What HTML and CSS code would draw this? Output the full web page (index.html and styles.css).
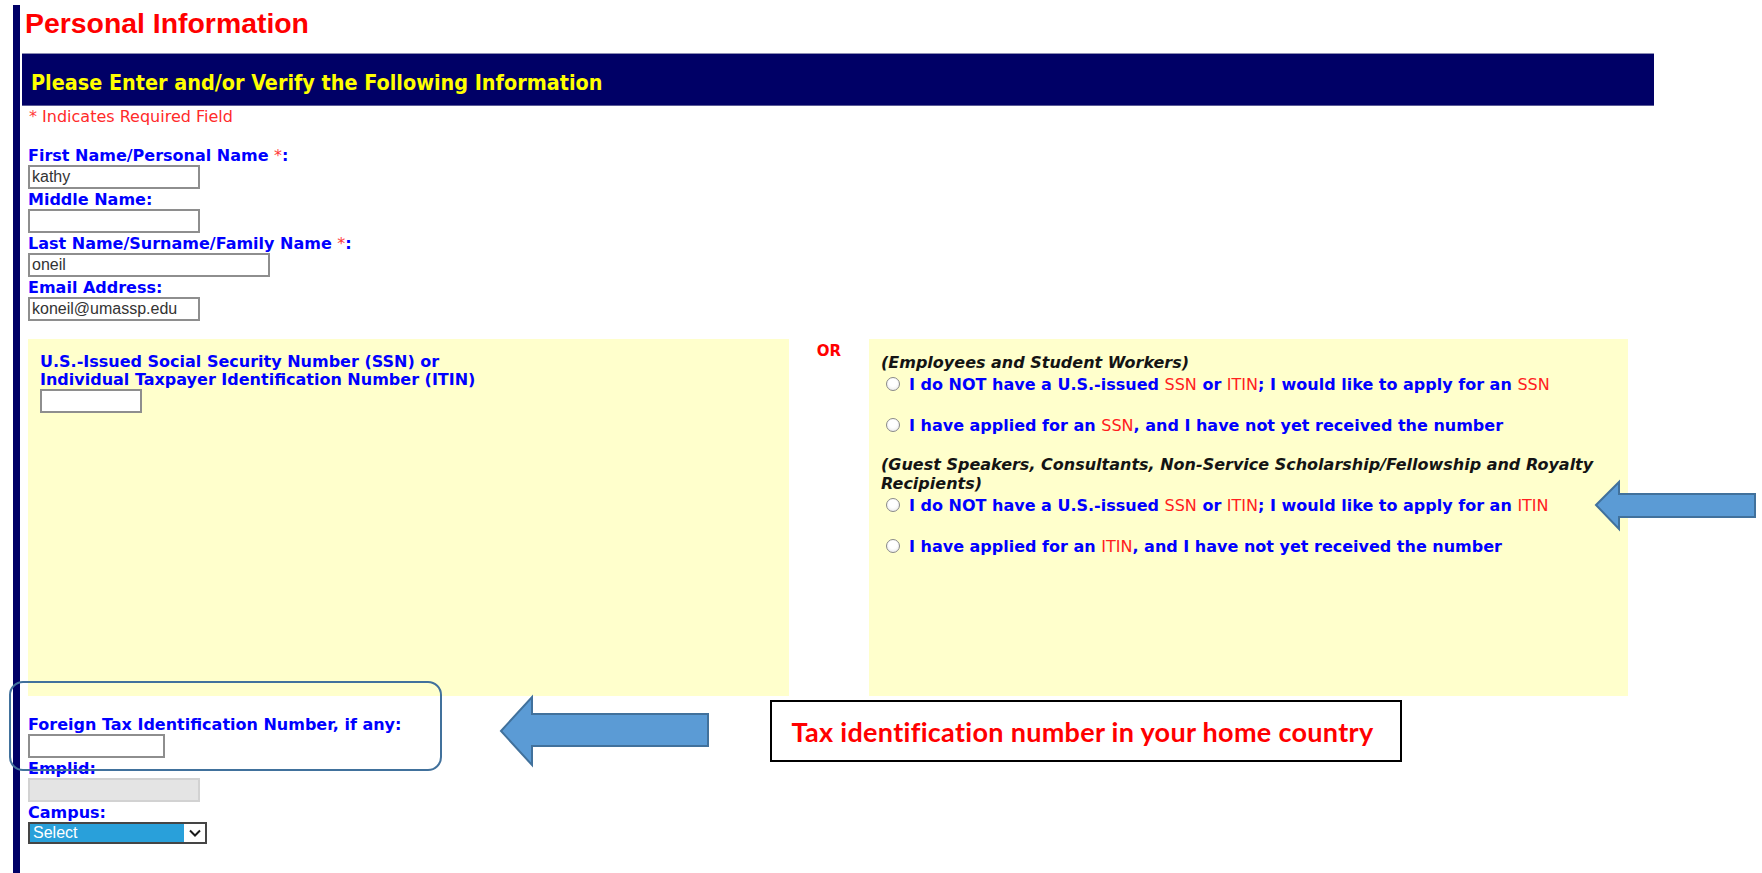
FILE: index.html
```html
<!DOCTYPE html>
<html lang="en">
<head>
<meta charset="utf-8">
<title>Personal Information</title>
<link rel="stylesheet" href="styles.css">
</head>
<body>
<div class="page">
  <h1 class="page-title">Personal Information</h1>
  <div class="section-band">Please Enter and/or Verify the Following Information</div>
  <p class="required-note"><span class="req">*</span> Indicates Required Field</p>

  <div class="fields">
    <div class="field">
      <label class="field-label" for="first-name">First Name/Personal Name <span class="req">*</span>:</label>
      <input class="text-input w-md" id="first-name" type="text" value="kathy">
    </div>
    <div class="field">
      <label class="field-label" for="middle-name">Middle Name:</label>
      <input class="text-input w-md" id="middle-name" type="text" value="">
    </div>
    <div class="field">
      <label class="field-label" for="last-name">Last Name/Surname/Family Name <span class="req">*</span>:</label>
      <input class="text-input w-lg" id="last-name" type="text" value="oneil">
    </div>
    <div class="field">
      <label class="field-label" for="email">Email Address:</label>
      <input class="text-input w-md" id="email" type="text" value="koneil@umassp.edu">
    </div>
  </div>

  <div class="tax-id-row">
    <div class="panel panel-ssn">
      <label class="panel-label" for="ssn">U.S.-Issued Social Security Number (SSN) or<br>Individual Taxpayer Identification Number (ITIN)</label>
      <input class="text-input w-sm" id="ssn" type="text" value="">
    </div>
    <div class="or-cell">OR</div>
    <div class="panel panel-choices">
      <div class="choice-group">
        <div class="group-title">(Employees and Student Workers)</div>
        <label class="radio-row"><input class="radio" type="radio" name="no-number"><span>I do NOT have a U.S.-issued <span class="acr">SSN</span> or <span class="acr">ITIN</span>; I would like to apply for an <span class="acr">SSN</span></span></label>
        <label class="radio-row"><input class="radio" type="radio" name="no-number"><span>I have applied for an <span class="acr">SSN</span>, and I have not yet received the number</span></label>
      </div>
      <div class="choice-group">
        <div class="group-title">(Guest Speakers, Consultants, Non-Service Scholarship/Fellowship and Royalty Recipients)</div>
        <label class="radio-row"><input class="radio" type="radio" name="no-number"><span>I do NOT have a U.S.-issued <span class="acr">SSN</span> or <span class="acr">ITIN</span>; I would like to apply for an <span class="acr">ITIN</span></span></label>
        <label class="radio-row"><input class="radio" type="radio" name="no-number"><span>I have applied for an <span class="acr">ITIN</span>, and I have not yet received the number</span></label>
      </div>
    </div>
  </div>

  <div class="fields fields-lower">
    <div class="field">
      <label class="field-label" for="foreign-tin">Foreign Tax Identification Number, if any:</label>
      <input class="text-input w-xs" id="foreign-tin" type="text" value="">
    </div>
    <div class="field">
      <label class="field-label" for="emplid">Emplid:</label>
      <input class="text-input w-md is-disabled" id="emplid" type="text" value="" disabled>
    </div>
    <div class="field">
      <span class="field-label">Campus:</span>
      <div class="select">
        <span class="select-value">Select</span>
        <span class="select-arrow">
          <svg width="12" height="8" viewBox="0 0 12 8"><polyline points="1,1.5 6,6.5 11,1.5" fill="none" stroke="#1a1a1a" stroke-width="2"/></svg>
        </span>
      </div>
    </div>
  </div>
</div>

<!-- callouts drawn over the form -->
<div class="focus-ring"></div>
<svg class="arrow arrow-foreign" width="214" height="74" viewBox="0 0 214 74">
  <polygon points="4,37 35,3 35,20 211,20 211,52 35,52 35,71" />
</svg>
<div class="callout">Tax identification number in your home country</div>
<svg class="arrow arrow-itin" width="166" height="53" viewBox="0 0 166 53">
  <polygon points="3,26 26,3 26,15 162,15 162,38 26,38 26,50" />
</svg>
</body>
</html>
```

FILE: styles.css
```css
* {
  box-sizing: border-box;
}

html,
body {
  margin: 0;
  background: #ffffff;
}

body {
  position: relative;
  font-family: "DejaVu Sans", Verdana, sans-serif;
  font-size: 16px;
  color: #0000ff;
}

/* navy rule down the left side of the form */
.page {
  margin: 5px 0 0 13px;
  padding: 2px 0 0 2px;
  border-left: 7px solid #000066;
  min-height: 868px;
}

.page-title {
  margin: 0 0 14px;
  padding-left: 3px;
  font: bold 28.4px/32px "Liberation Sans", Arial, sans-serif;
  color: #ff0000;
}

.section-band {
  width: 1632px;
  height: 53px;
  padding: 17px 0 0 9px;
  background: #000066;
  border-top: 1px solid #8c8cb4;
  border-bottom: 1px solid #5a5a96;
  font-family: "DejaVu Sans Condensed", "DejaVu Sans", sans-serif;
  font-stretch: condensed;
  font-weight: bold;
  font-size: 21.4px;
  line-height: 24px;
  color: #ffff00;
  white-space: nowrap;
}

.required-note {
  margin: 1px 0 0 7px;
  font-size: 16px;
  line-height: 19px;
  color: #ff2a2a;
}

.req {
  color: #ff3b3b;
  font-weight: normal;
}

/* stacked label + input rows */
.fields {
  margin: 20px 0 0 6px;
}

.fields-lower {
  margin-top: 19px;
}

.field {
  margin-bottom: 1px;
}

.field-label {
  display: block;
  font-weight: bold;
  line-height: 19px;
  color: #0000ff;
  white-space: nowrap;
}

.text-input {
  display: block;
  height: 24px;
  margin: 0;
  padding: 0 2px;
  border: 2px solid #8e8e8e;
  border-radius: 0;
  background: #ffffff;
  font: 16px "Liberation Sans", Arial, sans-serif;
  color: #333333;
  outline: none;
}

.w-xs { width: 137px; }
.w-sm { width: 102px; }
.w-md { width: 172px; }
.w-lg { width: 242px; }

.text-input.is-disabled {
  background: #e4e4e4;
  border-color: #d2d2d2;
}

/* dropdown */
.select {
  display: flex;
  width: 179px;
  height: 22px;
  border: 2px solid #454545;
  background: #ffffff;
}

.select-value {
  width: 154px;
  padding-left: 3px;
  background: #29a0da;
  color: #ffffff;
  font: 16px/18px "Liberation Sans", Arial, sans-serif;
}

.select-arrow {
  flex: 1;
  display: flex;
  align-items: center;
  justify-content: center;
}

/* SSN / ITIN row */
.tax-id-row {
  display: flex;
  height: 357px;
  margin: 18px 0 0 6px;
}

.panel {
  background: #ffffcc;
  padding: 14px 12px;
}

.panel-ssn {
  width: 761px;
}

.panel-label {
  display: block;
  font-weight: bold;
  line-height: 18px;
  color: #0000ff;
  white-space: nowrap;
}

.or-cell {
  width: 80px;
  padding-top: 3px;
  text-align: center;
  font-weight: bold;
  font-size: 15px;
  line-height: 18px;
  color: #ff0000;
}

.panel-choices {
  width: 759px;
  padding-right: 4px;
}

.choice-group + .choice-group {
  margin-top: 20px;
}

.group-title {
  margin-bottom: 2px;
  font-weight: bold;
  font-style: italic;
  line-height: 19px;
  color: #141414;
}

.radio-row {
  display: flex;
  align-items: center;
  gap: 9px;
  height: 20px;
  padding-left: 5px;
  font-weight: bold;
  color: #0000ff;
  white-space: nowrap;
}

.radio-row + .radio-row {
  margin-top: 21px;
}

.radio {
  appearance: none;
  -webkit-appearance: none;
  flex: none;
  width: 14px;
  height: 14px;
  margin: 0;
  border: 1px solid #8a8a8a;
  border-radius: 50%;
  background: radial-gradient(circle at 50% 40%, #ffffff 40%, #e2e2e2 100%);
}

.acr {
  font-weight: normal;
  color: #ff2020;
}

/* callouts */
.focus-ring {
  position: absolute;
  left: 9px;
  top: 681px;
  width: 433px;
  height: 90px;
  border: 2px solid #41719c;
  border-radius: 14px;
}

.arrow {
  position: absolute;
}

.arrow polygon {
  fill: #5b9bd5;
  stroke: #41719c;
  stroke-width: 2;
}

.arrow-foreign {
  left: 497px;
  top: 694px;
}

.arrow-itin {
  left: 1593px;
  top: 479px;
}

.callout {
  position: absolute;
  left: 770px;
  top: 700px;
  width: 632px;
  height: 62px;
  padding-right: 7px;
  display: flex;
  align-items: center;
  justify-content: center;
  border: 2px solid #000000;
  background: #ffffff;
  font: bold 27px "Lato", "Liberation Sans", sans-serif;
  letter-spacing: 0.3px;
  color: #ff0000;
  white-space: nowrap;
}
```
